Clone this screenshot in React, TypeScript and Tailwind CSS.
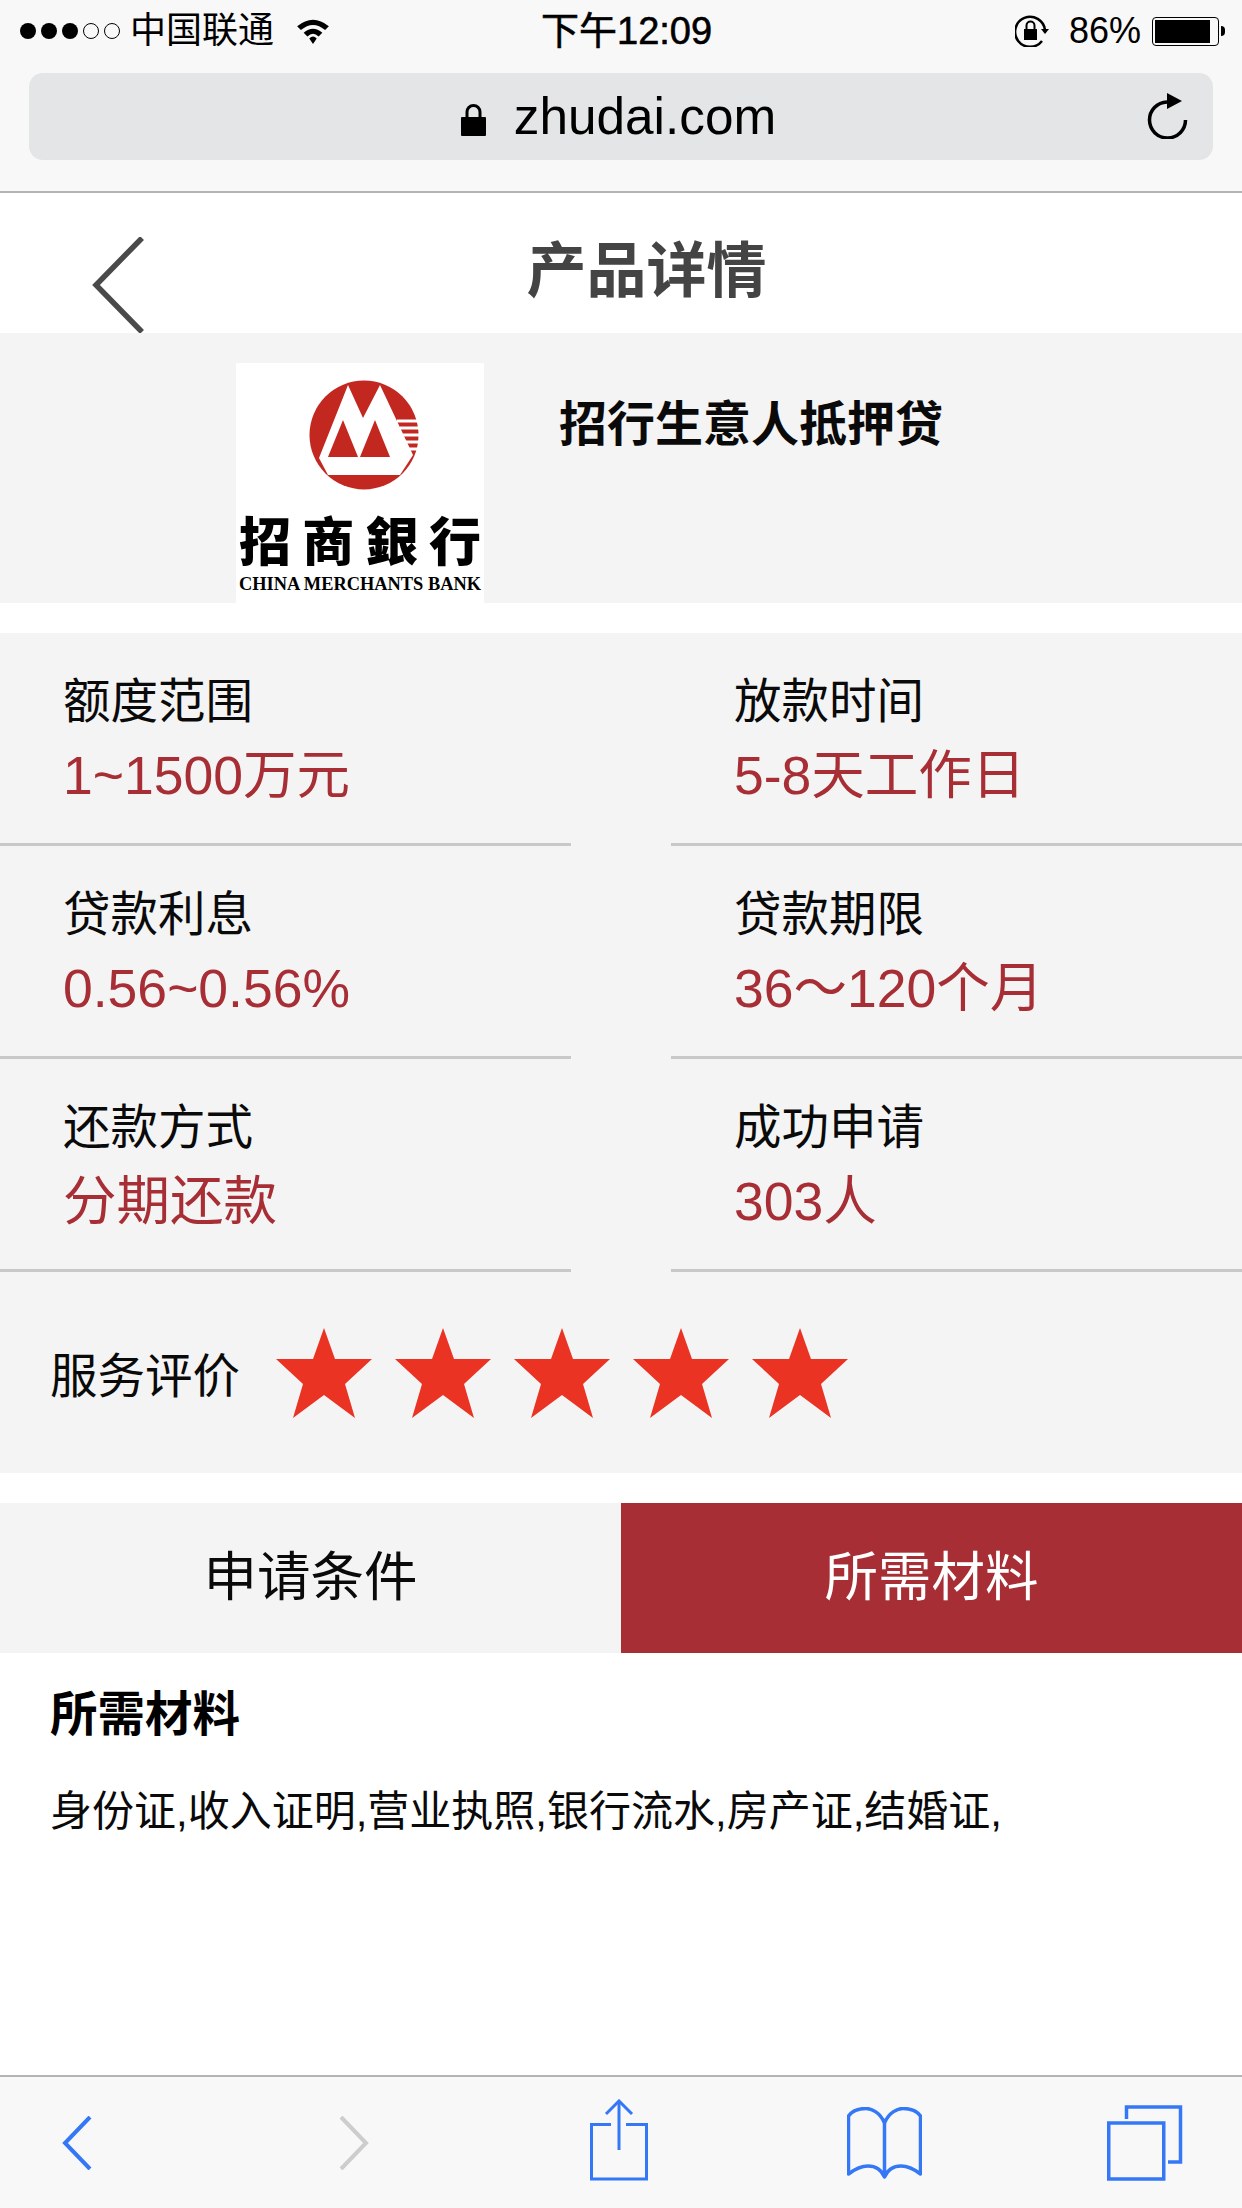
const sans = { fontFamily: '"Liberation Sans", "Noto Sans CJK SC", sans-serif' }

const stats = [
  [
    { label: '额度范围', value: '1~1500万元' },
    { label: '放款时间', value: '5-8天工作日' },
  ],
  [
    { label: '贷款利息', value: '0.56~0.56%' },
    { label: '贷款期限', value: '36～120个月' },
  ],
  [
    { label: '还款方式', value: '分期还款' },
    { label: '成功申请', value: '303人' },
  ],
]

const StatCell = ({ label, value }: { label: string; value: string }) => (
  <div className="h-[213px] border-b-[3px] border-[#c8c8c8] pl-[63px] pt-[39px]">
    <div className="text-[47.5px] leading-[60px] text-[#0a0a0a]">{label}</div>
    <div className="mt-[14px] text-[53.5px] leading-[60px] text-[#a82e35]">{value}</div>
  </div>
)

const Star = () => (
  <svg width="96" height="90" viewBox="0 0 96 90">
    <polygon points="48,0 59,31 96,31 69,56 79,90 48,67 17,90 27,56 0,31 37,31" fill="#ea3323" />
  </svg>
)

const BankLogo = () => (
  <div className="flex h-[240px] w-[248px] flex-col items-center bg-white pt-[17px] text-black">
    <svg className="ml-[8px]" width="110" height="110" viewBox="0 0 110 110">
      <circle cx="55" cy="55" r="54.5" fill="#c2281f" />
      <polygon points="10,78 39,5 54,38 71,5 104,75 91,95 19,95" fill="#fff" />
      <polygon points="19,77 34,40 49,77" fill="#c2281f" />
      <polygon points="51,77 66,40 81,77" fill="#c2281f" />
      <path d="M88 41 H110 M91 48 H110 M94 55 H110 M97 62 H110 M100 69 H110" stroke="#fff" strokeWidth="3" />
    </svg>
    <div
      className="mt-[20px] flex w-full justify-between px-[3px] text-[52px] font-black leading-[58px]"
      style={{ fontFamily: '"Noto Sans CJK TC", sans-serif' }}
    >
      <span>招</span>
      <span>商</span>
      <span>銀</span>
      <span>行</span>
    </div>
    <div
      className="mt-[6px] whitespace-nowrap text-[18.4px] font-bold leading-[20px]"
      style={{ fontFamily: '"Liberation Serif", serif' }}
    >
      CHINA MERCHANTS BANK
    </div>
  </div>
)

const App = () => {
  return (
    <div className="flex h-[2208px] w-[1242px] flex-col bg-white" style={sans}>
      {/* Browser chrome */}
      <div className="h-[193px] border-b-2 border-[#b4b4b4] bg-[#f8f8f8] px-[29px]">
        <div className="relative flex h-[62px] items-center justify-between text-[36px] text-black">
          <div className="flex items-center">
            <div className="-ml-[9px] flex gap-[5px]">
              {[0, 1, 2].map(i => (
                <div key={i} className="h-[16px] w-[16px] rounded-full bg-black" />
              ))}
              {[3, 4].map(i => (
                <div key={i} className="h-[16px] w-[16px] rounded-full border border-black" />
              ))}
            </div>
            <span className="ml-[10px]">中国联通</span>
            <svg className="ml-[21px]" width="36" height="28" viewBox="0 0 38 30">
              <path d="M2 10 Q19 -4 36 10 L32 14 Q19 3 6 14 Z M9 17 Q19 8 29 17 L25 21 Q19 15 13 21 Z M15 23 Q19 19 23 23 L19 29 Z" fill="#000" />
            </svg>
          </div>
          <span className="absolute left-[512px] top-[3px] text-[38px] [-webkit-text-stroke:0.6px_black]">下午12:09</span>
          <div className="-mr-[12px] flex items-center">
            <svg width="34" height="32" viewBox="0 0 34 32" fill="none">
              <path d="M27 26 A15 15 0 1 1 30 15" stroke="#000" strokeWidth="2.5" />
              <path d="M26 14 H34 L30 19 Z" fill="#000" />
              <rect x="9" y="14" width="13" height="11" fill="#000" />
              <path d="M11.5 14 V10.5 a4 4 0 0 1 8 0 V14" stroke="#000" strokeWidth="2" />
            </svg>
            <span className="ml-[20px]">86%</span>
            <div className="ml-[11px] flex items-center gap-[2px]">
              <div className="h-[29px] w-[67px] rounded-[4px] border border-black p-[2px]">
                <div className="h-full w-[90%] bg-black" />
              </div>
              <div className="h-[10px] w-[4px] rounded-r-full bg-black" />
            </div>
          </div>
        </div>
        <div className="relative mt-[11px] flex h-[87px] items-center justify-center rounded-[14px] bg-[#e4e5e7] pr-[5px] text-black">
          <svg width="25" height="32" viewBox="0 0 25 32" className="mr-[28px] mt-[6px]" fill="none">
            <rect y="13" width="25" height="19" rx="1" fill="#000" />
            <path d="M6 14 V8 a6.5 6.5 0 0 1 13 0 V14" stroke="#000" strokeWidth="3" />
          </svg>
          <span className="mt-[2px] text-[51.3px]">zhudai.com</span>
          <svg className="absolute right-[25px] top-[20px]" width="42" height="46" viewBox="0 0 42 46" fill="none">
            <path d="M21 9 A18 18 0 1 0 39.5 27" stroke="#000" strokeWidth="3.5" />
            <path d="M21 0 L36 8 L21 16 Z" fill="#000" />
          </svg>
        </div>
      </div>

      {/* Page header */}
      <div className="relative flex h-[140px] items-center justify-center bg-white">
        <svg className="absolute left-[92px] top-[44px]" width="54" height="96" viewBox="0 0 54 96" fill="none">
          <path d="M50 1 L4 48 L50 95" stroke="#4a4a4a" strokeWidth="5.5" />
        </svg>
        <h1 className="ml-[51px] mt-[18px] text-[60px] font-bold text-[#444]">产品详情</h1>
      </div>

      {/* Product */}
      <div className="flex h-[270px] items-start bg-[#f4f4f4] pl-[236px] pt-[30px]">
        <BankLogo />
        <div className="ml-[75px] mt-[32px] text-[48px] font-bold leading-[60px] text-[#0a0a0a]">招行生意人抵押贷</div>
      </div>

      {/* Stats */}
      <div className="mt-[30px] bg-[#f4f4f4]">
        {stats.map((row, i) => (
          <div key={i} className="flex justify-between">
            <div className="w-[571px]">
              <StatCell {...row[0]} />
            </div>
            <div className="w-[571px]">
              <StatCell {...row[1]} />
            </div>
          </div>
        ))}
        <div className="flex h-[201px] items-center pl-[50px]">
          <span className="mt-[9px] text-[47.5px] text-[#0a0a0a]">服务评价</span>
          <div className="ml-[36px] mt-[1px] flex gap-[23px]">
            {[0, 1, 2, 3, 4].map(i => (
              <Star key={i} />
            ))}
          </div>
        </div>
      </div>

      {/* Tabs */}
      <div className="mt-[30px] flex h-[150px] text-[53.5px]">
        <div className="flex w-[621px] items-center justify-center bg-[#f4f4f4] text-[#0a0a0a]">申请条件</div>
        <div className="flex flex-1 items-center justify-center bg-[#a82e35] text-white">所需材料</div>
      </div>

      {/* Tab content */}
      <div className="flex-1 px-[50px] pt-[32px]">
        <h2 className="text-[47.5px] font-bold leading-[60px] text-black">所需材料</h2>
        <p className="mt-[39px] text-[42px] leading-[56px] text-[#0a0a0a]">身份证,收入证明,营业执照,银行流水,房产证,结婚证,</p>
      </div>

      {/* Browser toolbar */}
      <div className="flex h-[133px] items-center border-t-2 border-[#b4b4b4] bg-[#f8f8f8] pl-[62px]">
        <svg width="30" height="54" viewBox="0 0 30 54" fill="none">
          <path d="M28 1 L3 27 L28 53" stroke="#3478f6" strokeWidth="4" />
        </svg>
        <svg className="ml-[247px]" width="30" height="54" viewBox="0 0 30 54" fill="none">
          <path d="M2 1 L27 27 L2 53" stroke="#cdcdcd" strokeWidth="4" />
        </svg>
        <svg className="-mt-[6px] ml-[221px]" width="58" height="82" viewBox="0 0 58 82" fill="none" stroke="#3478f6">
          <path d="M29 2 V51" strokeWidth="3" />
          <path d="M16 15 L29 2 L42 15" strokeWidth="3" />
          <path d="M21 25.5 H1.5 V80 H56.5 V25.5 H36" strokeWidth="3" />
        </svg>
        <svg className="ml-[199px]" width="75" height="72" viewBox="0 0 75 72" fill="none" stroke="#3478f6" strokeWidth="3.5" strokeLinejoin="round" strokeLinecap="round">
          <path d="M37.5 16 C33 5 24 1.5 19 1.5 C12 1.5 5 4 1.5 9 V67 C8 62 15 59 21 59 C28 59 34 62 37.5 70 C41 62 47 59 54 59 C60 59 67 62 73.5 67 V9 C70 4 63 1.5 56 1.5 C51 1.5 42 5 37.5 16 V70" />
        </svg>
        <svg className="ml-[185px]" width="76" height="76" viewBox="0 0 76 76" fill="none" stroke="#3478f6">
          <path d="M19.5 14 V2 H73.5 V57 H61" strokeWidth="3.5" />
          <rect x="1.75" y="18" width="55" height="56" strokeWidth="3.5" />
        </svg>
      </div>
    </div>
  )
}

export default App
